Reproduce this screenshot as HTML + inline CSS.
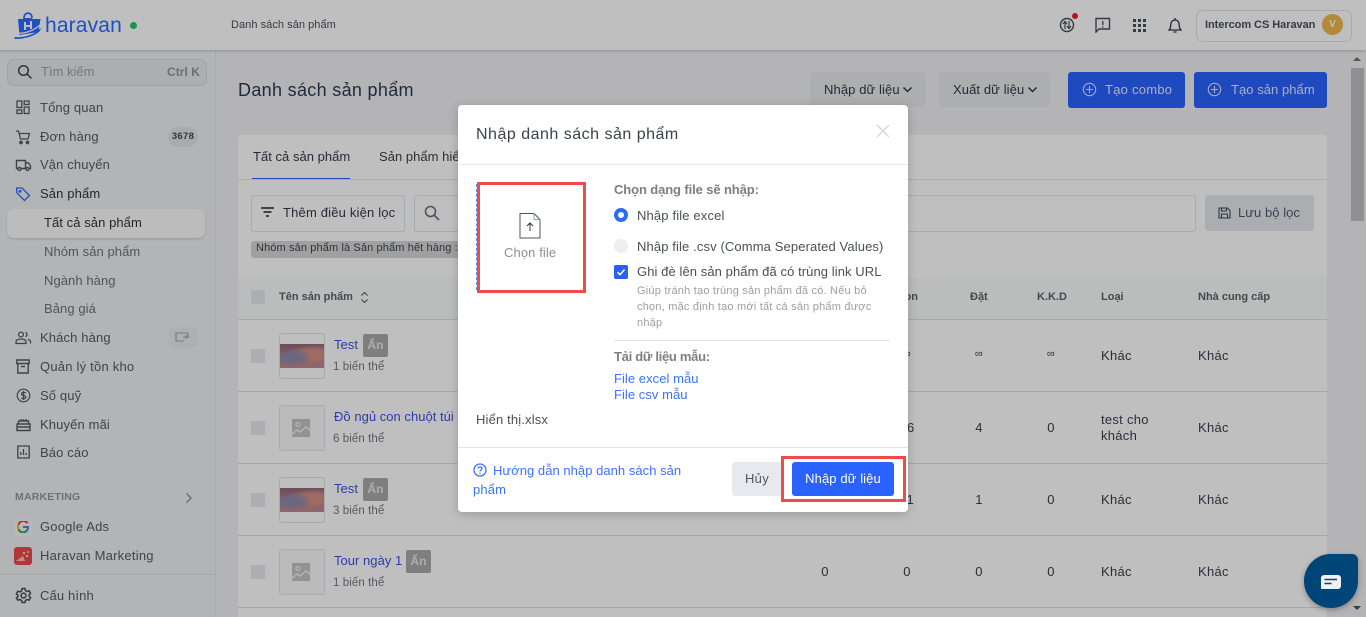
<!DOCTYPE html>
<html lang="vi"><head><meta charset="utf-8"><title>Danh sách sản phẩm</title>
<style>
html,body{margin:0;padding:0;width:1366px;height:617px;overflow:hidden;background:#f0f1f3}
body{font-family:"Liberation Sans","Noto Sans CJK SC",sans-serif;font-size:13px;color:#212b36;position:relative;letter-spacing:.13px}
div,svg,span.t{position:absolute}
.t{white-space:nowrap;line-height:16px;height:16px}
.m{left:40px;color:#545b63;margin-top:1px}
.s{left:44px;color:#6c727a;margin-top:1px;letter-spacing:.07px}
.b{font-weight:bold;font-size:11px;color:#5c6269;letter-spacing:0;margin-top:1px}
.c{width:14px;height:14px;background:#e6e9ee;border-radius:2px;left:251px}
.thumb{left:279px;width:44px;height:44px;border:1px solid #dfe3e8;border-radius:3px;background:#fff;overflow:hidden}
.cloud{position:absolute;left:0;right:0;top:10px;height:24px;background:radial-gradient(ellipse at 28% 55%,#918aab 0 22%,transparent 45%),radial-gradient(ellipse at 75% 45%,#d59085 0 25%,transparent 55%),linear-gradient(180deg,#8f677b,#b57f88 60%,#bd8895)}
.nm{left:334px;color:#3953dd;letter-spacing:.03px}
.sub{left:333px;font-size:11.5px;color:#737980;letter-spacing:.08px;margin-top:1px}
.bd{height:23px;width:25px;background:#aaa;border-radius:2px;color:#e8e8e8;text-align:center;line-height:22px;font-size:12px;font-weight:bold}
.ln{left:238px;width:1089px;height:1px;background:#dde0e4}
.v{text-align:center;width:30px;color:#3a4149;letter-spacing:.3px}
.k{color:#3a4149;letter-spacing:.28px}
.d{margin-top:1px}
</style></head><body>

<!-- main content -->
<div class="t" style="left:238px;top:79px;height:22px;line-height:22px;font-size:18px;letter-spacing:.32px;color:#2a3a4f">Danh sách sản phẩm</div>

<div style="left:810px;top:72px;width:116px;height:35px;background:#e6e8ea;border-radius:4px"></div>
<div class="t d" style="left:824px;top:81px;color:#2f3a4a;letter-spacing:.1px">Nhập dữ liệu</div>
<svg style="left:902px;top:86px" width="11" height="8"><path d="M1.5 1.5L5.5 5.5L9.5 1.5" fill="none" stroke="#2f3a4a" stroke-width="1.5"/></svg>
<div style="left:939px;top:72px;width:111px;height:35px;background:#e6e8ea;border-radius:4px"></div>
<div class="t d" style="left:953px;top:81px;color:#2f3a4a;letter-spacing:.1px">Xuất dữ liệu</div>
<svg style="left:1027px;top:86px" width="11" height="8"><path d="M1.5 1.5L5.5 5.5L9.5 1.5" fill="none" stroke="#2f3a4a" stroke-width="1.5"/></svg>

<div style="left:1068px;top:72px;width:117px;height:36px;background:#2962ff;border-radius:3px"></div>
<svg style="left:1082px;top:82px" width="15" height="15"><circle cx="7.5" cy="7.5" r="6.2" fill="none" stroke="#dfe6ff" stroke-width="1.1"/><path d="M7.5 4v7M4 7.5h7" stroke="#dfe6ff" stroke-width="1.1"/></svg>
<div class="t d" style="left:1105px;top:81px;color:#e4ebff;letter-spacing:.25px">Tạo combo</div>
<div style="left:1194px;top:72px;width:133px;height:36px;background:#2962ff;border-radius:3px"></div>
<svg style="left:1207px;top:82px" width="15" height="15"><circle cx="7.5" cy="7.5" r="6.2" fill="none" stroke="#dfe6ff" stroke-width="1.1"/><path d="M7.5 4v7M4 7.5h7" stroke="#dfe6ff" stroke-width="1.1"/></svg>
<div class="t d" style="left:1231px;top:81px;color:#e4ebff;letter-spacing:.05px">Tạo sản phẩm</div>

<!-- card -->
<div style="left:238px;top:135px;width:1089px;height:482px;background:#fff;border-radius:4px 4px 0 0"></div>
<div class="t d" style="left:253px;top:148px;color:#2f3a4a;letter-spacing:.03px">Tất cả sản phẩm</div>
<div class="t d" style="left:379px;top:148px;color:#3a4149;letter-spacing:.03px">Sản phẩm hiển thị</div>
<div class="ln" style="top:179px;background:#dfe3e8"></div>
<div style="left:252px;top:178px;width:98px;height:1px;background:#2962ff"></div>

<div style="left:251px;top:195px;width:152px;height:35px;border:1px solid #dfe3e8;border-radius:3px"></div>
<svg style="left:260px;top:206px" width="15" height="12"><path d="M1 2h13M3.5 6h8M6 10h3" stroke="#222" stroke-width="1.4"/></svg>
<div class="t d" style="left:283px;top:204px;color:#2f3a4a;letter-spacing:.18px">Thêm điều kiện lọc</div>
<div style="left:414px;top:195px;width:780px;height:35px;border:1px solid #dfe3e8;border-radius:3px"></div>
<svg style="left:423px;top:204px" width="18" height="18"><circle cx="7.5" cy="7.5" r="5" fill="none" stroke="#6a7079" stroke-width="1.6"/><path d="M11 11l5 5" stroke="#6a7079" stroke-width="1.6"/></svg>
<div style="left:1205px;top:195px;width:109px;height:36px;background:#e3e8ec;border-radius:3px"></div>
<svg style="left:1218px;top:207px" width="13" height="12"><path d="M1 1h8.5L12 3.5V11H1zM3.5 1v3h5V1M3.5 11V7h6v4" fill="none" stroke="#3a4656" stroke-width="1.1"/></svg>
<div class="t d" style="left:1238px;top:204px;color:#4d5a6b;letter-spacing:.05px">Lưu bộ lọc</div>
<div style="left:251px;top:241px;width:230px;height:17px;background:#d6d6d6;border-radius:3px"></div>
<div class="t" style="left:256px;top:240px;font-size:11px;letter-spacing:.12px;color:#3f454c">Nhóm sản phẩm là Sản phẩm hết hàng :</div>

<div style="left:238px;top:277px;width:1089px;height:42px;background:#fafbfb"></div>
<div class="ln" style="top:319px"></div><div class="ln" style="top:391px"></div><div class="ln" style="top:463px"></div><div class="ln" style="top:535px"></div><div class="ln" style="top:607px"></div>

<div class="c" style="top:290px"></div>
<div class="t b" style="left:279px;top:288px">Tên sản phẩm</div>
<svg style="left:360px;top:291px" width="9" height="13"><path d="M1.5 4.5L4.5 1.5L7.5 4.5M1.5 8.5L4.5 11.5L7.5 8.5" fill="none" stroke="#555" stroke-width="1"/></svg>
<div class="t b" style="left:906px;top:288px;width:12px;overflow:hidden;direction:rtl">on</div>
<div class="t b" style="left:970px;top:288px">Đặt</div>
<div class="t b" style="left:1037px;top:288px">K.K.D</div>
<div class="t b" style="left:1101px;top:288px">Loại</div>
<div class="t b" style="left:1198px;top:288px">Nhà cung cấp</div>

<!-- row1 -->
<div class="c" style="top:349px"></div>
<div class="thumb" style="top:333px"><div class="cloud"></div></div>
<div class="t nm" style="top:337px">Test</div>
<div class="bd" style="left:363px;top:334px">Ẩn</div>
<div class="t sub" style="top:358px">1 biến thể</div>
<div class="t v" style="left:892px;top:346px;font-size:11px">∞</div><div class="t v" style="left:964px;top:346px;font-size:11px">∞</div><div class="t v" style="left:1036px;top:346px;font-size:11px">∞</div>
<div class="t k" style="left:1101px;top:348px">Khác</div><div class="t k" style="left:1198px;top:348px">Khác</div>
<!-- row2 -->
<div class="c" style="top:421px"></div>
<div class="thumb" style="top:405px;background:#f8f9fa"><svg style="left:12px;top:13px" width="18" height="18"><rect width="18" height="18" fill="#c3c3c3"/><circle cx="6" cy="5.5" r="2" fill="none" stroke="#f2f2f2" stroke-width="1.2"/><path d="M0 14l5-4 3 2 6-5 4 3v2l-4-3-6 5-3-2-5 4z" fill="#eee"/></svg></div>
<div class="t nm" style="top:409px">Đồ ngủ con chuột túi</div>
<div class="t sub" style="top:430px">6 biến thể</div>
<div class="t v" style="left:892px;top:420px">16</div><div class="t v" style="left:964px;top:420px">4</div><div class="t v" style="left:1036px;top:420px">0</div>
<div class="t k" style="left:1101px;top:412px">test cho</div><div class="t k" style="left:1101px;top:428px">khách</div><div class="t k" style="left:1198px;top:420px">Khác</div>
<!-- row3 -->
<div class="c" style="top:493px"></div>
<div class="thumb" style="top:477px"><div class="cloud"></div></div>
<div class="t nm" style="top:481px">Test</div>
<div class="bd" style="left:363px;top:478px">Ẩn</div>
<div class="t sub" style="top:502px">3 biến thể</div>
<div class="t v" style="left:892px;top:492px">11</div><div class="t v" style="left:964px;top:492px">1</div><div class="t v" style="left:1036px;top:492px">0</div>
<div class="t k" style="left:1101px;top:492px">Khác</div><div class="t k" style="left:1198px;top:492px">Khác</div>
<!-- row4 -->
<div class="c" style="top:565px"></div>
<div class="thumb" style="top:549px;background:#f8f9fa"><svg style="left:12px;top:13px" width="18" height="18"><rect width="18" height="18" fill="#c3c3c3"/><circle cx="6" cy="5.5" r="2" fill="none" stroke="#f2f2f2" stroke-width="1.2"/><path d="M0 14l5-4 3 2 6-5 4 3v2l-4-3-6 5-3-2-5 4z" fill="#eee"/></svg></div>
<div class="t nm" style="top:553px">Tour ngày 1</div>
<div class="bd" style="left:406px;top:550px">Ẩn</div>
<div class="t sub" style="top:574px">1 biến thể</div>
<div class="t v" style="left:810px;top:564px">0</div><div class="t v" style="left:892px;top:564px">0</div><div class="t v" style="left:964px;top:564px">0</div><div class="t v" style="left:1036px;top:564px">0</div>
<div class="t k" style="left:1101px;top:564px">Khác</div><div class="t k" style="left:1198px;top:564px">Khác</div>

<!-- scrollbar -->
<div style="left:1349px;top:50px;width:17px;height:567px;background:#f1f1f1"></div>
<div style="left:1351px;top:68px;width:13px;height:153px;background:#c1c1c1"></div>
<svg style="left:1352px;top:56px" width="10" height="6"><path d="M1 5L5 1L9 5z" fill="#707070"/></svg>
<svg style="left:1352px;top:605px" width="10" height="6"><path d="M1 1L5 5L9 1z" fill="#505050"/></svg>

<!-- sidebar -->
<div style="left:0;top:50px;width:215px;height:567px;background:#eef0f2;border-right:1px solid #e2e4e7"></div>
<div style="left:7px;top:59px;width:198px;height:25px;background:#e6eaee;border:1px solid #d5d9de;border-radius:7px"></div>
<svg style="left:16px;top:63px" width="18" height="18"><circle cx="7.5" cy="7.5" r="4.8" fill="none" stroke="#444" stroke-width="1.5"/><path d="M11 11l4.5 4.5" stroke="#444" stroke-width="1.5"/></svg>
<div class="t" style="left:41px;top:64px;color:#9aa0a8;letter-spacing:0">Tìm kiếm</div>
<div class="t" style="left:167px;top:64px;color:#8f949b;font-size:12px;font-weight:bold;letter-spacing:.05px">Ctrl K</div>

<div class="t m" style="top:99px">Tổng quan</div>
<svg style="left:16px;top:100px" width="14" height="15" fill="none" stroke="#545b63" stroke-width="1.3"><rect x="1" y="1" width="4.8" height="6.5"/><rect x="8.2" y="1" width="4.8" height="3.5"/><rect x="1" y="10" width="4.8" height="3.5"/><rect x="8.2" y="7" width="4.8" height="6.5"/></svg>
<div class="t m" style="top:128px">Đơn hàng</div>
<svg style="left:15px;top:129px" width="16" height="16" fill="none" stroke="#545b63" stroke-width="1.3"><path d="M1 2h2.5l2 8h7.5l1.5-5.5H4"/><circle cx="6" cy="13.5" r="1.2" fill="#545b63"/><circle cx="12.5" cy="13.5" r="1.2" fill="#545b63"/></svg>
<div style="left:168px;top:127px;width:30px;height:20px;background:#e3e5e8;border-radius:10px;text-align:center;line-height:20px;font-size:9.5px;font-weight:bold;color:#44494f;letter-spacing:.3px">3678</div>
<div class="t m" style="top:156px">Vận chuyển</div>
<svg style="left:15px;top:158px" width="17" height="14" fill="none" stroke="#545b63" stroke-width="1.4"><path d="M3 10.5H1.5v-8h9v8H6M10.5 5h3l2 2.5v3h-1.5M10.5 10.5h1"/><circle cx="4.5" cy="11" r="1.5"/><circle cx="12.5" cy="11" r="1.5"/></svg>
<div class="t m" style="top:185px;color:#2f343a">Sản phẩm</div>
<svg style="left:15px;top:186px" width="16" height="16" fill="none" stroke="#2b6bff" stroke-width="1.3"><path d="M1.5 2h5.5l7.5 7.5-5 5L2 7z"/><circle cx="5" cy="5.3" r=".8"/></svg>
<div style="left:7px;top:209px;width:198px;height:29px;background:#fbfbfb;border-radius:7px;box-shadow:0 1px 2px rgba(0,0,0,.15)"></div>
<div class="t s" style="top:214px;color:#2f343a">Tất cả sản phẩm</div>
<div class="t s" style="top:243px">Nhóm sản phẩm</div>
<div class="t s" style="top:272px">Ngành hàng</div>
<div class="t s" style="top:300px">Bảng giá</div>
<div class="t m" style="top:329px">Khách hàng</div>
<svg style="left:15px;top:331px" width="17" height="14" fill="none" stroke="#545b63" stroke-width="1.3"><circle cx="6" cy="3.5" r="2.4"/><path d="M1 12.5v-1.5c0-2 2-3 5-3s5 1 5 3v1.5z"/><path d="M10.5 1.3a2.4 2.4 0 0 1 0 4.4M13 8.3c1.5.5 2.5 1.3 2.5 2.7v1.5"/></svg>
<div style="left:169px;top:327px;width:29px;height:21px;background:#e8eaed;border-radius:6px"></div>
<svg style="left:175px;top:332px" width="16" height="11" fill="none" stroke="#9ca1a7" stroke-width="1.1"><path d="M13 6V1H1v8h8M8 5H14M11 3v4"/></svg>
<div class="t m" style="top:358px;letter-spacing:.22px">Quản lý tồn kho</div>
<svg style="left:16px;top:359px" width="14" height="15" fill="none" stroke="#545b63" stroke-width="1.4"><path d="M.8 1h12.4v3.5H.8zM1.8 4.5V14h10.4V4.5M5 7.5h4"/></svg>
<div class="t m" style="top:387px">Số quỹ</div>
<svg style="left:16px;top:388px" width="15" height="15" fill="none" stroke="#545b63" stroke-width="1.2"><circle cx="7.5" cy="7.5" r="6.3"/><path d="M9.8 5.2C9 4 5.5 4 5.5 6c0 2.2 4.3 1 4.3 3.2 0 1.9-3.6 1.9-4.5.6M7.5 3v9"/></svg>
<div class="t m" style="top:416px">Khuyến mãi</div>
<svg style="left:16px;top:417px" width="15" height="15" fill="none" stroke="#545b63" stroke-width="1.4"><path d="M1 7h13v6.5H1zM2.5 7V4h10v3M1 10h13M5 4V2M7.5 4V2M10 4V2"/></svg>
<div class="t m" style="top:444px">Báo cáo</div>
<svg style="left:17px;top:445px" width="13" height="14" fill="none" stroke="#545b63" stroke-width="1.3"><path d="M.8 1h11.4v12H.8zM3.8 10V7M6.5 10V4M9.2 10V8"/></svg>
<div class="t d" style="left:15px;top:488px;font-size:10.5px;font-weight:bold;color:#9097a1;letter-spacing:.2px">MARKETING</div>
<svg style="left:185px;top:492px" width="8" height="12"><path d="M1.5 1.5L6 6L1.5 10.5" fill="none" stroke="#8b9098" stroke-width="1.3"/></svg>
<div style="left:14px;top:518px;width:18px;height:18px;background:#f4f4f4;border-radius:3px"></div>
<svg style="left:17px;top:521px" width="12" height="12"><path d="M10.5 2.2A5 5 0 0 0 1.5 3.7" fill="none" stroke="#ea4335" stroke-width="2"/><path d="M1.5 3.7a5 5 0 0 0 0 4.6" fill="none" stroke="#fbbc05" stroke-width="2"/><path d="M1.5 8.3a5 5 0 0 0 8 1.7" fill="none" stroke="#34a853" stroke-width="2"/><path d="M6 6h5c0 1.6-.5 3-1.500 4" fill="none" stroke="#4285f4" stroke-width="2"/></svg>
<div class="t m" style="top:518px;letter-spacing:.2px">Google Ads</div>
<div style="left:14px;top:547px;width:18px;height:18px;background:#ee4b4b;border-radius:3px"></div>
<svg style="left:15px;top:550px" width="16" height="14"><path d="M1 11l7-5 2 5z" fill="#f3c4c4"/><circle cx="9" cy="3" r="1" fill="#fff"/><circle cx="12" cy="6" r="1" fill="#fff"/><circle cx="13" cy="2" r=".8" fill="#fff"/></svg>
<div class="t m" style="top:547px;letter-spacing:.23px">Haravan Marketing</div>
<div style="left:0;top:574px;width:215px;height:1px;background:#e0e2e5"></div>
<svg style="left:15px;top:587px" width="17" height="17" fill="none" stroke="#4a5058" stroke-width="1.5"><circle cx="8.500" cy="8.500" r="2.400"/><path d="M7 1.500h3l.4 2 1.700 1 2-.7 1.500 2.600-1.500 1.400v1.400l1.500 1.400-1.500 2.600-2-.7-1.700 1-.4 2H7l-.4-2-1.700-1-2 .7L1.400 11l1.500-1.400V8.200L1.400 6.800l1.500-2.600 2 .7 1.700-1z"/></svg>
<div class="t m" style="top:587px">Cấu hình</div>

<!-- header -->
<div style="left:0;top:0;width:1366px;height:50px;background:#fff;box-shadow:0 1px 3px rgba(0,0,0,.2)"></div>
<svg style="left:13px;top:12px" width="30" height="28"><path d="M5 7h5l.5-1h8l1 1h8l-2 13-19 3z" fill="#2b6bff"/><path d="M11 6c0-6.500 8-6.500 8 0" fill="none" stroke="#2b6bff" stroke-width="1.700"/><path d="M12 10v8M18 9v8M12 14h6" stroke="#fff" stroke-width="2"/><path d="M1 25c10 1 20-2 27-9l-1 3c-5 5-15 8-25 8z" fill="#2b6bff"/><path d="M2 21c9 1 18-2 25-8" fill="none" stroke="#fff" stroke-width="1.200"/></svg>
<div class="t" style="left:45px;top:14px;height:24px;line-height:24px;font-size:21px;letter-spacing:.15px;color:#2b6bff">haravan</div>
<div style="left:130px;top:22px;width:7px;height:7px;border-radius:50%;background:#22c468"></div>
<div class="t d" style="left:231px;top:16px;font-size:11px;letter-spacing:.05px;color:#4a5058">Danh sách sản phẩm</div>

<svg style="left:1059px;top:17px" width="16" height="16" fill="none" stroke="#4a5058" stroke-width="1.400"><circle cx="8" cy="8" r="6.500"/><path d="M6 12V5M4 7l2-2.500L8 7M10 4v7M8 9l2 2.500L12 9" stroke-width="1.200"/></svg>
<div style="left:1072px;top:13px;width:6px;height:6px;border-radius:50%;background:#e8202a"></div>
<svg style="left:1095px;top:17px" width="16" height="16" fill="none" stroke="#4a5058" stroke-width="1.400"><path d="M1 1.500h13.500v10.500H4l-3 3z"/><path d="M7.800 4v4M7.800 9.300v1.200"/></svg>
<svg style="left:1133px;top:19px" width="13" height="13" fill="#4a5058"><rect x="0" y="0" width="3" height="3"/><rect x="5" y="0" width="3" height="3"/><rect x="10" y="0" width="3" height="3"/><rect x="0" y="5" width="3" height="3"/><rect x="5" y="5" width="3" height="3"/><rect x="10" y="5" width="3" height="3"/><rect x="0" y="10" width="3" height="3"/><rect x="5" y="10" width="3" height="3"/><rect x="10" y="10" width="3" height="3"/></svg>
<svg style="left:1168px;top:17px" width="14" height="17" fill="none" stroke="#33383e" stroke-width="1.300"><path d="M1 13h12c-1.500-1.500-1.800-3-1.800-5.500C11.200 5 9.500 3 7 3S2.800 5 2.800 7.500C2.800 10 2.500 11.500 1 13zM7 1v2M5.500 15h3"/></svg>
<div style="left:1196px;top:10px;width:154px;height:30px;border:1px solid #dfe3e8;border-radius:7px"></div>
<div class="t" style="left:1205px;top:17px;font-size:11px;font-weight:bold;letter-spacing:-.05px;color:#4a5058">Intercom CS Haravan</div>
<div style="left:1322px;top:14px;width:21px;height:21px;border-radius:50%;background:#efb84a;color:#fff;text-align:center;line-height:21px;font-size:10px;font-weight:bold">V</div>

<!-- overlay -->
<div style="left:0;top:0;width:1366px;height:617px;background:rgba(0,0,0,.25)"></div>

<!-- chat bubble -->
<div style="left:1304px;top:554px;width:54px;height:54px;background:#004578;border-radius:27px 6px 27px 27px;box-shadow:0 2px 6px rgba(0,0,0,.3)"></div>
<svg style="left:1321px;top:575px" width="20" height="14"><path d="M3 0h14a3 3 0 0 1 3 3v8a3 3 0 0 1-3 3H1a1 1 0 0 1-1-1V3a3 3 0 0 1 3-3z" fill="#eef2f6"/><path d="M3.500 4.500h12.500M3.500 8.500h7" stroke="#004578" stroke-width="1.400"/></svg>

<!-- modal -->
<div style="left:458px;top:105px;width:450px;height:407px;background:#fff;border-radius:4px;box-shadow:0 2px 10px rgba(0,0,0,.2)"></div>
<div class="t" style="left:476px;top:125px;height:19px;line-height:19px;font-size:16px;letter-spacing:.5px;color:#3c4249">Nhập danh sách sản phẩm</div>
<svg style="left:876px;top:124px" width="14" height="14"><path d="M1 1l12 12M13 1L1 13" stroke="#d6d8da" stroke-width="1.500"/></svg>
<div style="left:458px;top:164px;width:450px;height:1px;background:#e6e8ea"></div>

<div style="left:476px;top:184px;width:1px;height:106px;border-left:1px dashed #4d8df0"></div>
<div style="left:477px;top:182px;width:103px;height:105px;border:3px solid #f24a4a"></div>
<svg style="left:518px;top:212px" width="24" height="28" fill="none" stroke="#4d5560" stroke-width="1"><path d="M2 1.500h14l6 6V26H2z"/><path d="M16 1.500v6h6" stroke="#9aa0a6"/><path d="M12 19v-8M9 14l3-3 3 3" stroke="#333"/></svg>
<div class="t d" style="left:504px;top:244px;color:#8b8f94;letter-spacing:.1px">Chọn file</div>

<div class="t" style="left:614px;top:182px;font-weight:bold;letter-spacing:-.11px;color:#7c7f83">Chọn dạng file sẽ nhập:</div>
<div style="left:614px;top:208px;width:14px;height:14px;border-radius:50%;background:#2a6cf6"></div>
<div style="left:618px;top:212px;width:6px;height:6px;border-radius:50%;background:#fff"></div>
<div class="t d" style="left:637px;top:207px;color:#4b5056;letter-spacing:.15px">Nhập file excel</div>
<div style="left:614px;top:239px;width:14px;height:14px;border-radius:50%;background:#eeeeee"></div>
<div class="t d" style="left:637px;top:238px;color:#4b5056;letter-spacing:.12px">Nhập file .csv (Comma Seperated Values)</div>
<div style="left:614px;top:265px;width:14px;height:14px;border-radius:2px;background:#2a5ff0"></div>
<svg style="left:614px;top:265px" width="14" height="14"><path d="M3.500 7.200L6 9.700 10.500 4.500" fill="none" stroke="#fff" stroke-width="1.500"/></svg>
<div class="t d" style="left:637px;top:263px;color:#4b5056;letter-spacing:.08px">Ghi đè lên sản phẩm đã có trùng link URL</div>
<div class="t d" style="left:637px;top:282px;font-size:11px;letter-spacing:.21px;color:#9b9ea2">Giúp tránh tạo trùng sản phẩm đã có. Nếu bỏ</div>
<div class="t d" style="left:637px;top:298px;font-size:11px;letter-spacing:.21px;color:#9b9ea2">chọn, mặc định tạo mới tất cả sản phẩm được</div>
<div class="t d" style="left:637px;top:314px;font-size:11px;letter-spacing:.21px;color:#9b9ea2">nhập</div>
<div style="left:614px;top:340px;width:276px;height:1px;background:#dfe3e8"></div>
<div class="t" style="left:614px;top:349px;font-weight:bold;letter-spacing:-.29px;color:#7c7f83">Tải dữ liệu mẫu:</div>
<div class="t d" style="left:614px;top:370px;color:#3a72ff;letter-spacing:.05px">File excel mẫu</div>
<div class="t d" style="left:614px;top:386px;color:#3a72ff;letter-spacing:.05px">File csv mẫu</div>
<div class="t d" style="left:476px;top:411px;color:#4b5056;letter-spacing:.15px">Hiển thị.xlsx</div>

<div style="left:458px;top:447px;width:450px;height:1px;background:#e2e4e7"></div>
<svg style="left:473px;top:463px" width="14" height="14" fill="none" stroke="#3a72ff" stroke-width="1.300"><circle cx="7" cy="7" r="6"/><path d="M5 5.500C5 3.500 9 3.500 9 5.500c0 1.500-2 1.500-2 3M7 9.800v1.200"/></svg>
<div class="t d" style="left:493px;top:462px;color:#3a72ff;letter-spacing:.04px">Hướng dẫn nhập danh sách sản</div>
<div class="t d" style="left:473px;top:481px;color:#3a72ff">phẩm</div>
<div style="left:732px;top:462px;width:50px;height:34px;background:#e6eaee;border-radius:3px 0 0 3px;text-align:center;line-height:33px;color:#4f565e;letter-spacing:.3px">Hủy</div>
<div style="left:792px;top:462px;width:102px;height:34px;background:#2962ff;border-radius:3px;text-align:center;line-height:33px;color:#fff;letter-spacing:.1px">Nhập dữ liệu</div>
<div style="left:781px;top:456px;width:119px;height:40px;border:3px solid #f24a4a"></div>

</body></html>
